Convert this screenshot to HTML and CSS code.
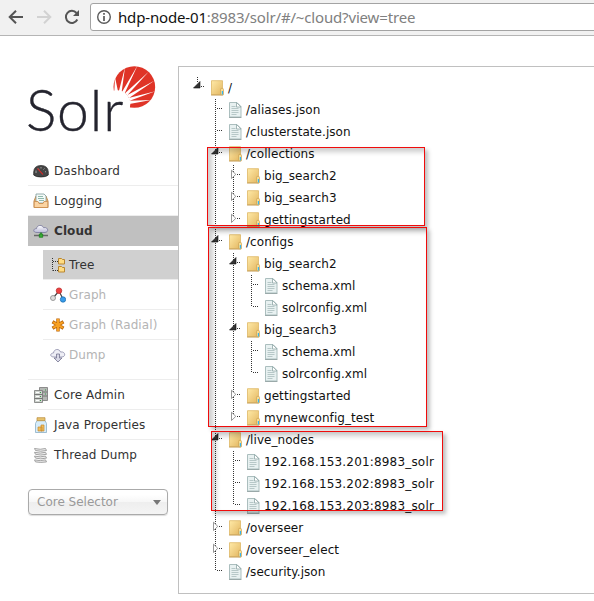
FILE: index.html
```html
<!DOCTYPE html>
<html lang="en">
<head>
<meta charset="utf-8">
<title>Solr Admin</title>
<link rel="stylesheet" href="styles.css">
</head>
<body>
<svg class="defs" aria-hidden="true">
  <defs>
    <linearGradient id="gold" x1="0" y1="0" x2="1" y2="1"><stop offset="0" stop-color="#ffeaa8"/><stop offset="1" stop-color="#e3b660"/></linearGradient>
    <linearGradient id="cloudfill" x1="0" y1="0" x2="0" y2="1"><stop offset="0" stop-color="#fff"/><stop offset="1" stop-color="#b9b9d6"/></linearGradient>
    <symbol id="folder" viewBox="0 0 16 16"><path d="M1.500.7h11v14h-11z" fill="url(#gold)" stroke="#deb866" stroke-width=".8"/><path d="M1 15h12" stroke="#bd9245" stroke-width=".8"/><path d="M10.500 14.700v-5q0-1.500 1.500-1.500t1.500 1.500v5z" fill="#f8dd93" stroke="#cda052" stroke-width=".7"/><path d="M12.400 11v3.500" stroke="#35b5ef" stroke-width="1.200"/></symbol>
    <symbol id="file" viewBox="0 0 16 16"><path d="M1.500.5h7.500l4 4v10.500H1.500z" fill="#e8f1f1" stroke="#abbebe"/><path d="M8.500.5v4.500H13z" fill="#fff" stroke="#8ea6a6" stroke-width=".8"/><path d="M3.500 4.500h4M3.500 6.500h7M3.500 8.500h7M3.500 10.500h7M3.500 12.500h5" stroke="#a9bebe" stroke-width=".8"/><path d="M1 15.500h12.500" stroke="#8a9c9c" stroke-width=".8"/></symbol>
    <symbol id="open" viewBox="0 0 18 22"><path d="M8 4.500V11H1.500z" fill="#333" stroke="#111" stroke-width=".6"/><path d="M9 9.500h1M11 9.500h1" stroke="#333"/></symbol>
    <symbol id="closed" viewBox="0 0 18 22"><path d="M3.500 5.200v8.300l4.300-4.150z" fill="#fff" stroke="#8b8b8b" stroke-width=".9"/><path d="M9 9.500h1M11 9.500h1" stroke="#333"/></symbol>
    <symbol id="leaf" viewBox="0 0 18 22"><path d="M7 9.500h1M9 9.500h1M11 9.500h1" stroke="#333"/></symbol>
  </defs>
</svg>

<header class="toolbar">
  <svg class="tool back" viewBox="0 0 16 16"><path d="M15 8H2M8 1.700 1.700 8 8 14.300" fill="none" stroke="#555" stroke-width="2"/></svg>
  <svg class="tool forward" viewBox="0 0 16 16"><path d="M1 8h13M8 1.700 14.300 8 8 14.300" fill="none" stroke="#d2d2d2" stroke-width="2"/></svg>
  <svg class="tool reload" viewBox="0 0 16 16"><path d="M13.300 10.500A6 6 0 1 1 12.500 4" fill="none" stroke="#555" stroke-width="2"/><path d="M15 1v6H9z" fill="#555"/></svg>
  <div class="address">
    <svg class="info" viewBox="0 0 16 16"><circle cx="8" cy="8" r="6.300" fill="none" stroke="#5a5a5a" stroke-width="1.400"/><path d="M8 4v1.700M8 7v5" stroke="#5a5a5a" stroke-width="1.700"/></svg>
    <div class="url"><span class="host">hdp-node-01</span>:8983/solr/#/~cloud?view=tree</div>
  </div>
</header>

<div class="page">
  <aside class="sidebar">
    <div class="logo">
      <span class="wordmark">Solr</span>
      <svg class="sun" viewBox="0 0 156 150"><circle cx="79" cy="75" r="62.500" fill="#df3427"/><circle cx="26" cy="126" r="41" fill="#fff"/><path d="M21 46 19 88H30zM51 16 32 90 41 90zM89 10 42 90 50 94zM122 29 51 94 58 100zM139 56 57 100 63 108zM142 88 62 108 65 116zM130 114 62 116 64 126zM0 88h21l20 38 25 4-2 20H0z" fill="#fff"/></svg>
    </div>
    <nav>
      <ul class="menu">
        <li><a class="item"><svg class="icon" viewBox="0 0 16 16"><path d="M.7 12V9Q1 2.500 8 2.500T15.300 9v3q-2 2-7.300 2T.7 12z" fill="#454545" stroke="#222" stroke-width=".7"/><path d="M3 10V7.500M5 5.500l1 1M8 4v1.500M11.500 5.500l-1 1M13 8.500l-1 .5" stroke="#bbb" stroke-width=".8"/><path d="M4.500 5.500 10 11.500" stroke="#e92323" stroke-width="1.100"/></svg>Dashboard</a></li>
        <li><a class="item"><svg class="icon" viewBox="0 0 16 16"><path d="M1 8 3 3h10l2 5v6.500H1z" fill="#f3b66d" stroke="#b97a3b" stroke-width=".8"/><path d="M3 1h8l2 2v7H5L3 8z" fill="#f4faf8" stroke="#7f9b9a" stroke-width=".8"/><path d="M5 3.500h5M5 5.500h6M6 7.500h5" stroke="#8eb9ad"/><path d="M1.200 8.500H5l1 2h4l1-2h3.800v6H1.200z" fill="#fbd4a2" stroke="#c88b4d" stroke-width=".8"/></svg>Logging</a></li>
        <li class="active"><a class="item"><svg class="icon" viewBox="0 0 16 16"><path d="M4 9.500C-.5 9.500 0 5.500 3.500 5.700 4 1.500 9.500 1.500 10.500 4.700 15 3.500 16.500 9 12 9.500z" fill="url(#cloudfill)" stroke="#77779c" stroke-width=".8"/><path d="M1 12.500h14" stroke="#686868" stroke-width="1.500"/><path d="M8 9.500V12" stroke="#1b831c" stroke-width="1.500"/><path d="M6.300 11h3.400v3.300H6.300z" fill="#39ad35" stroke="#187c1b" stroke-width=".7"/></svg>Cloud</a></li>
      </ul>
      <ul class="menu submenu">
        <li class="active"><a class="item"><svg class="icon" viewBox="0 0 16 16"><path d="M2.500 1v12.500M3 4.500h5M3 13.500h5" stroke="#333" stroke-dasharray="1 1"/><path d="M8.500 1.500h3l1 1h2v4.500h-6zM8.500 9.500h3l1 1h2V15h-6z" fill="#ffdc83" stroke="#b98630"/></svg>Tree</a></li>
        <li><a class="item"><svg class="icon" viewBox="0 0 16 16"><path d="M3 11 9 4l4 8" fill="none" stroke="#444" stroke-width="1.200"/><circle cx="3" cy="11" r="2.500" fill="#ddd" stroke="#888" stroke-width=".8"/><circle cx="9" cy="3.700" r="2.800" fill="#ed4242" stroke="#b72a2a" stroke-width=".7"/><circle cx="13" cy="12.500" r="2.700" fill="#399deb" stroke="#1768aa" stroke-width=".7"/></svg>Graph</a></li>
        <li><a class="item"><svg class="icon" viewBox="0 0 16 16"><path d="M8 1.500v13M2.500 4.800l11 6.400M2.500 11.200l11-6.400" stroke="#b76209" stroke-width="3.400"/><path d="M8 2.100v11.800M3.100 5.100l9.800 5.800M3.100 10.900l9.800-5.800" stroke="#f7a021" stroke-width="2.200"/></svg>Graph (Radial)</a></li>
        <li><a class="item"><svg class="icon" viewBox="0 0 16 16"><path d="M4 10C-.5 10 0 6 3.500 6 4 1.500 9.500 1.500 10.500 5 15 4 16.500 9.500 12 10z" fill="#eeeef5" stroke="#8c8ca8" stroke-width=".8"/><path d="M6.500 7h3v4H12l-4 4-4-4h2.500z" fill="#d9d9e7" stroke="#73738f" stroke-width=".8"/></svg>Dump</a></li>
      </ul>
      <ul class="menu lower">
        <li><a class="item"><svg class="icon" viewBox="0 0 16 16"><path d="M6.500.5h8v13h-8z" fill="#b4b8b4" stroke="#777" stroke-width=".8"/><path d="M6.500 5h8M6.500 9h8" stroke="#777"/><path d="M1.500 3.500h8v12h-8z" fill="#cfd4cf" stroke="#777" stroke-width=".8"/><path d="M1.500 7.500h8M1.500 11.500h8" stroke="#777"/><path d="M3 5.500h3M3 9.500h3M3 13.500h3" stroke="#fff"/><path d="M7 5.500h1M7 9.500h1M7 13.500h1M12 3h1M12 7h1" stroke="#3b9b4a"/></svg>Core Admin</a></li>
        <li><a class="item"><svg class="icon" viewBox="0 0 16 16"><path d="M4 3.500h8l1.500 3v9h-11v-9z" fill="#d7edfa" stroke="#8bafc5" stroke-width=".8"/><path d="M4 .7h8v3H4z" fill="#e8c46f" stroke="#b78b39" stroke-width=".7"/><path d="M5 10h4v4H5zM8 8h3v6H8z" fill="#f1be5a" stroke="#c58a2f" stroke-width=".7"/></svg>Java Properties</a></li>
        <li><a class="item"><svg class="icon" viewBox="0 0 16 16"><path d="M1.500 1.500q6 1.500 11 0l1 2q-6 1.500-11 0zM1.500 5.300q6 1.500 11 0l1 2q-6 1.500-11 0zM1.500 9.100q6 1.500 11 0l1 2q-6 1.500-11 0zM1.500 12.900q6 1.500 11 0l1 2q-6 1-11 0z" fill="#eee" stroke="#999" stroke-width=".9"/></svg>Thread Dump</a></li>
      </ul>
    </nav>
    <div class="selector"><span>Core Selector</span><i class="caret"></i></div>
  </aside>

  <main class="panel">
    <ul class="tree root">
      <li><div class="row"><svg class="toggle"><use href="#open"/></svg><svg class="node"><use href="#folder"/></svg><span>/</span></div>
        <ul class="tree">
          <li><div class="row"><svg class="toggle"><use href="#leaf"/></svg><svg class="node"><use href="#file"/></svg><span>/aliases.json</span></div></li>
          <li><div class="row"><svg class="toggle"><use href="#leaf"/></svg><svg class="node"><use href="#file"/></svg><span>/clusterstate.json</span></div></li>
          <li><div class="row"><svg class="toggle"><use href="#open"/></svg><svg class="node"><use href="#folder"/></svg><span>/collections</span></div>
            <ul class="tree">
              <li><div class="row"><svg class="toggle"><use href="#closed"/></svg><svg class="node"><use href="#folder"/></svg><span>big_search2</span></div></li>
              <li><div class="row"><svg class="toggle"><use href="#closed"/></svg><svg class="node"><use href="#folder"/></svg><span>big_search3</span></div></li>
              <li><div class="row"><svg class="toggle"><use href="#closed"/></svg><svg class="node"><use href="#folder"/></svg><span>gettingstarted</span></div></li>
            </ul>
          </li>
          <li><div class="row"><svg class="toggle"><use href="#open"/></svg><svg class="node"><use href="#folder"/></svg><span>/configs</span></div>
            <ul class="tree">
              <li><div class="row"><svg class="toggle"><use href="#open"/></svg><svg class="node"><use href="#folder"/></svg><span>big_search2</span></div>
                <ul class="tree">
                  <li><div class="row"><svg class="toggle"><use href="#leaf"/></svg><svg class="node"><use href="#file"/></svg><span>schema.xml</span></div></li>
                  <li><div class="row"><svg class="toggle"><use href="#leaf"/></svg><svg class="node"><use href="#file"/></svg><span>solrconfig.xml</span></div></li>
                </ul>
              </li>
              <li><div class="row"><svg class="toggle"><use href="#open"/></svg><svg class="node"><use href="#folder"/></svg><span>big_search3</span></div>
                <ul class="tree">
                  <li><div class="row"><svg class="toggle"><use href="#leaf"/></svg><svg class="node"><use href="#file"/></svg><span>schema.xml</span></div></li>
                  <li><div class="row"><svg class="toggle"><use href="#leaf"/></svg><svg class="node"><use href="#file"/></svg><span>solrconfig.xml</span></div></li>
                </ul>
              </li>
              <li><div class="row"><svg class="toggle"><use href="#closed"/></svg><svg class="node"><use href="#folder"/></svg><span>gettingstarted</span></div></li>
              <li><div class="row"><svg class="toggle"><use href="#closed"/></svg><svg class="node"><use href="#folder"/></svg><span>mynewconfig_test</span></div></li>
            </ul>
          </li>
          <li><div class="row"><svg class="toggle"><use href="#open"/></svg><svg class="node"><use href="#folder"/></svg><span>/live_nodes</span></div>
            <ul class="tree hosts">
              <li><div class="row"><svg class="toggle"><use href="#leaf"/></svg><svg class="node"><use href="#file"/></svg><span>192.168.153.201:8983_solr</span></div></li>
              <li><div class="row"><svg class="toggle"><use href="#leaf"/></svg><svg class="node"><use href="#file"/></svg><span>192.168.153.202:8983_solr</span></div></li>
              <li><div class="row"><svg class="toggle"><use href="#leaf"/></svg><svg class="node"><use href="#file"/></svg><span>192.168.153.203:8983_solr</span></div></li>
            </ul>
          </li>
          <li><div class="row"><svg class="toggle"><use href="#closed"/></svg><svg class="node"><use href="#folder"/></svg><span>/overseer</span></div></li>
          <li><div class="row"><svg class="toggle"><use href="#closed"/></svg><svg class="node"><use href="#folder"/></svg><span>/overseer_elect</span></div></li>
          <li><div class="row"><svg class="toggle"><use href="#leaf"/></svg><svg class="node"><use href="#file"/></svg><span>/security.json</span></div></li>
        </ul>
      </li>
    </ul>
  </main>
</div>
<div class="mark mark-collections"></div>
<div class="mark mark-configs"></div>
<div class="mark mark-live"></div>
</body>
</html>
```
FILE: styles.css
```css
* { box-sizing: border-box; }
body {
  margin: 0;
  width: 594px;
  height: 601px;
  overflow: hidden;
  position: relative;
  background: #fff;
  color: #333;
  font: 12px "DejaVu Sans", Verdana, sans-serif;
}
ul { list-style: none; margin: 0; padding: 0; }
svg { display: block; flex: none; }
.defs { position: absolute; width: 0; height: 0; }

/* Browser toolbar */
.toolbar {
  display: flex;
  height: 36px;
  padding: 3px 0 0 8px;
  background: #f1f1f1;
  border-bottom: 1px solid #b5b5b5;
}
.tool { width: 16px; height: 16px; margin-top: 6px; }
.forward { margin-left: 12px; }
.reload { margin-left: 12px; }
.address {
  display: flex;
  align-items: center;
  flex: 1;
  height: 28px;
  margin: 0 -6px 0 10px;
  padding-left: 5px;
  background: #fff;
  border: 1px solid #a3a3a3;
  border-radius: 3px;
}
.info { width: 16px; height: 16px; }
.url {
  margin-left: 6px;
  color: #808080;
  font: 15px/26px "Noto Sans", sans-serif;
  letter-spacing: -.16px;
  white-space: nowrap;
}
.host { color: #111; }

/* Sidebar */
.page { display: flex; padding: 30px 0 0 28px; }
.sidebar { width: 150px; flex: none; }
.logo { display: flex; height: 90px; position: relative; }
.wordmark {
  position: relative;
  z-index: 1;
  margin-left: -2px;
  padding-top: 9px;
  font: 300 57px/68px Lato, sans-serif;
  letter-spacing: .9px;
  color: #24242e;
  -webkit-text-stroke: .4px #24242e;
}
.sun {
  position: absolute;
  left: 80px;
  top: -4px;
  width: 52px;
  height: 50px;
}
.menu li { height: 30px; border-bottom: 1px solid #ededed; }
.menu li:last-child { border-bottom: 0; }
.item { display: flex; align-items: center; height: 29px; padding-left: 5px; letter-spacing: .1px; }
.icon { width: 16px; height: 16px; margin-right: 5px; }
.menu li.active { background: #c0c0c0; font-weight: bold; }
.submenu { margin: 4px 0 0 15px; color: #b4b4b4; }
.submenu .item { padding-left: 7px; }
.submenu .icon { margin-right: 3px; }
.submenu li.active { background: #d0d0d0; color: #333; font-weight: normal; }
.lower { margin-top: 9px; border-top: 1px solid #ededed; }
.selector {
  display: flex;
  align-items: center;
  justify-content: space-between;
  width: 140px;
  height: 26px;
  margin-top: 19px;
  padding: 0 6px 0 8px;
  border: 1px solid #aaa;
  border-radius: 4px;
  background: linear-gradient(#fff 20%, #f6f6f6 50%, #eee 52%, #f4f4f4 100%);
  box-shadow: 0 1px 1px #ddd;
  color: #999;
}
.caret { border: 4px solid transparent; border-top: 5px solid #777; border-bottom: 0; }

/* Cloud tree */
.panel {
  flex: none;
  width: 430px;
  height: 528px;
  padding: 10px 0 0 13px;
  border: 1px solid #c0c0c0;
  color: #111;
}
.tree .tree { padding-left: 18px; }
.tree li {
  background: repeating-linear-gradient(#333 0 1px, transparent 1px 2px) 5px 0 / 1px 100% no-repeat;
}
.tree li:last-child { background-size: 1px 10px; }
.root > li:last-child { background-size: 1px 6px; }
.row { display: flex; height: 22px; letter-spacing: .06px; line-height: 22px; white-space: nowrap; }
.hosts .row { letter-spacing: .18px; }
.toggle { width: 18px; height: 22px; }
.node { width: 16px; height: 16px; margin: 3px 2px 0 0; }

/* Highlight frames laid over the tree */
.mark {
  position: absolute;
  border: 1px solid #f00c0c;
  box-shadow: 3px 3px 4px rgba(0, 0, 0, .25), inset 4px 4px 5px rgba(0, 0, 0, .2);
}
.mark-collections { left: 207px; top: 147px; width: 218px; height: 79px; }
.mark-configs { left: 208px; top: 227px; width: 219px; height: 200px; }
.mark-live { left: 211px; top: 431px; width: 232px; height: 80px; }
```
